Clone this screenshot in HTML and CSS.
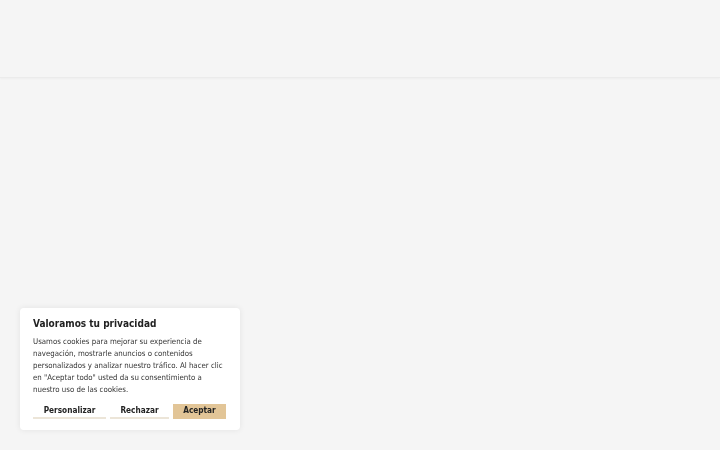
FILE: index.html
```html
<!DOCTYPE html>
<html lang="es">
<head>
<meta charset="utf-8">
<title>Privacidad</title>
<link rel="stylesheet" href="styles.css">
</head>
<body>
<header class="site-header"></header>
<main class="content"></main>
<div class="cookie-card">
  <h2 class="cookie-title">Valoramos tu privacidad</h2>
  <p class="cookie-text">Usamos cookies para mejorar su experiencia de navegación, mostrarle anuncios o contenidos personalizados y analizar nuestro tráfico. Al hacer clic en "Aceptar todo" usted da su consentimiento a nuestro uso de las cookies.</p>
  <div class="cookie-actions">
    <button class="btn btn-outline btn-custom">Personalizar</button>
    <button class="btn btn-outline btn-reject">Rechazar</button>
    <button class="btn btn-accept">Aceptar</button>
  </div>
</div>
</body>
</html>
```
FILE: styles.css
```css
html, body {
  margin: 0;
  padding: 0;
  background: #f5f5f5;
  font-family: "DejaVu Sans Condensed", "DejaVu Sans", sans-serif;
  height: 100%;
}
.site-header {
  height: 77px;
  border-bottom: 1px solid #ebebeb;
  box-shadow: 0 1px 2px rgba(0,0,0,0.03);
}
.cookie-card {
  position: fixed;
  left: 20px;
  bottom: 20px;
  width: 220px;
  box-sizing: border-box;
  padding: 9px 13px 11px 13px;
  background: #fff;
  border-radius: 4px;
  box-shadow: 0 0 6px rgba(0,0,0,0.08);
  color: #222;
}
.cookie-title {
  margin: 0 0 5px 0;
  font-size: 10px;
  font-weight: bold;
  line-height: 14px;
  color: #222;
}
.cookie-text {
  margin: 0 0 8px 0;
  font-size: 7.8px;
  line-height: 12px;
  color: #333;
}
.cookie-actions {
  display: flex;
  gap: 4px;
}
.btn {
  font-family: "DejaVu Sans Condensed", "DejaVu Sans", sans-serif;
  font-size: 8.2px;
  font-weight: bold;
  line-height: 10px;
  color: #222;
  height: 15px;
  padding: 0 0 2px 0;
  border: none;
  border-radius: 0;
  background: transparent;
  cursor: pointer;
  box-sizing: border-box;
}
.btn-outline {
  padding-bottom: 1px;
  border-bottom: 2px solid #ece5d8;
}
.btn-custom { width: 73px; }
.btn-reject { width: 59px; }
.btn-accept {
  width: 53px;
  padding-bottom: 3px;
  background: #e2c597;
}
```
